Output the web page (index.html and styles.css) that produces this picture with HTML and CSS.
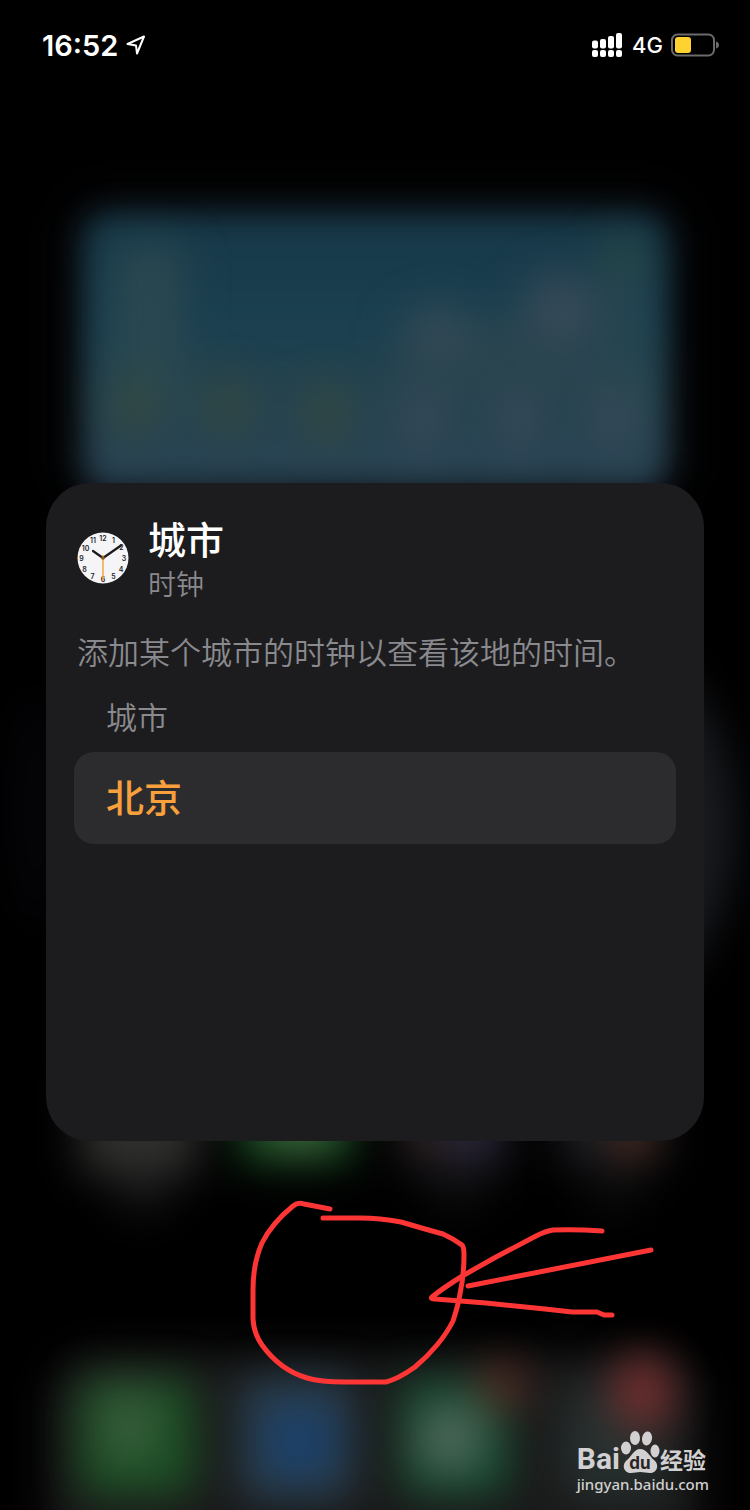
FILE: index.html
```
<!DOCTYPE html>
<html lang="zh-CN">
    <head>
      <meta charset="utf-8">
      <meta name="viewport" content="width=device-width, initial-scale=1">
      <title>城市</title>
      <link rel="stylesheet" href="styles.css">
    </head>
    <body>
        <div class="screen">
            <!-- 模糊的主屏幕背景 -->
            <svg class="wallpaper" viewBox="0 0 750 1510" aria-hidden="true">
                <defs>
                    <filter id="soft" x="-60%" y="-60%" width="220%" height="220%" color-interpolation-filters="sRGB"><feGaussianBlur stdDeviation="15"/></filter>
                    <filter id="softer" x="-90%" y="-90%" width="280%" height="280%" color-interpolation-filters="sRGB"><feGaussianBlur stdDeviation="21"/></filter>
                    <linearGradient id="sky" x1="0" y1="0" x2="0" y2="1">
                        <stop offset="0" stop-color="#173848"/>
                        <stop offset="0.4" stop-color="#1b4050"/>
                        <stop offset="0.65" stop-color="#25434f"/>
                        <stop offset="1" stop-color="#2a4354"/>
                    </linearGradient>
                </defs>
                <rect x="60" y="190" width="630" height="320" rx="50" fill="#07080a" filter="url(#softer)"/>
                <rect x="83" y="213" width="585" height="276" rx="26" fill="url(#sky)" filter="url(#soft)"/>
                <g filter="url(#softer)">
                    <rect x="116" y="246" width="66" height="170" fill="#2b4850"/>
                    <rect x="616" y="260" width="24" height="190" fill="#2b4850"/>
                    <circle cx="622" cy="256" r="16" fill="#345040"/>
                    <rect x="400" y="320" width="200" height="80" fill="#29444f"/>
                    <circle cx="438" cy="332" r="26" fill="#384b58"/>
                    <ellipse cx="562" cy="308" rx="38" ry="34" fill="#384a58"/>
                    <ellipse cx="134" cy="408" rx="18" ry="28" fill="#394a3c"/>
                    <ellipse cx="228" cy="406" rx="18" ry="28" fill="#394a3c"/>
                    <ellipse cx="326" cy="414" rx="18" ry="28" fill="#394a3c"/>
                    <ellipse cx="422" cy="420" rx="22" ry="34" fill="#384a59"/>
                    <ellipse cx="518" cy="420" rx="22" ry="34" fill="#384a59"/>
                    <ellipse cx="612" cy="420" rx="22" ry="34" fill="#384a59"/>
                </g>
                <ellipse cx="590" cy="825" rx="145" ry="190" fill="#191b20" filter="url(#softer)"/>
                <ellipse cx="36" cy="810" rx="16" ry="120" fill="#07050b" filter="url(#softer)"/>
                <g filter="url(#softer)">
                    <rect x="80" y="1080" width="118" height="94" fill="#2f2f2e"/>
                    <rect x="240" y="1070" width="112" height="92" fill="#1b5025"/>
                    <ellipse cx="300" cy="1126" rx="32" ry="24" fill="#41693f"/>
                    <rect x="400" y="1070" width="108" height="100" fill="#1c1a20"/>
                    <circle cx="470" cy="1130" r="28" fill="#2c283e"/>
                    <circle cx="424" cy="1136" r="18" fill="#31231c"/>
                    <rect x="560" y="1070" width="104" height="96" fill="#1c1d22"/>
                    <circle cx="632" cy="1136" r="24" fill="#4a2b20"/>
                    <rect x="115" y="1176" width="56" height="34" fill="#151515"/>
                    <rect x="430" y="1176" width="56" height="30" fill="#0f0f10"/>
                    <rect x="590" y="1176" width="50" height="30" fill="#0f0f10"/>
                </g>
                <rect x="50" y="1354" width="650" height="220" rx="50" fill="#1a1a1a" filter="url(#softer)"/>
                <g filter="url(#softer)">
                    <rect x="78" y="1378" width="118" height="118" rx="16" fill="#1c4f25"/>
                    <ellipse cx="128" cy="1425" rx="32" ry="40" fill="#355b38"/>
                    <rect x="240" y="1378" width="114" height="122" rx="16" fill="#293f4f"/>
                    <circle cx="300" cy="1442" r="36" fill="#1b406b"/>
                    <rect x="400" y="1378" width="110" height="118" rx="16" fill="#174c32"/>
                    <circle cx="450" cy="1438" r="36" fill="#4b6557"/>
                    <rect x="563" y="1386" width="102" height="112" rx="16" fill="#27302f"/>
                    <circle cx="502" cy="1386" r="24" fill="#572b23"/>
                    <ellipse cx="643" cy="1392" rx="32" ry="38" fill="#702e2e"/>
                </g>
            </svg>

            <header class="status-bar">
                <div class="status-left">
                    <span class="time">16:52</span>
                    <svg class="location" viewBox="0 0 20 20"><path d="M1.5 9 L18 1.5 L11 18.5 L10 10.5 Z"/></svg>
                </div>
                <div class="status-right">
                    <svg class="signal" viewBox="0 0 32 24">
                        <rect x="0" y="7.500" width="6" height="8" rx="2"/>
                        <rect x="8" y="6" width="6" height="9.500" rx="2"/>
                        <rect x="16" y="3" width="6" height="12.500" rx="2"/>
                        <rect x="24" y="0" width="6" height="15.500" rx="2"/>
                        <rect x="0" y="17" width="6" height="7" rx="2"/>
                        <rect x="8" y="17" width="6" height="7" rx="2"/>
                        <rect x="16" y="17" width="6" height="7" rx="2"/>
                        <rect x="24" y="17" width="6" height="7" rx="2"/>
                    </svg>
                    <span class="network">4G</span>
                    <svg class="battery" viewBox="0 0 48 24">
                        <rect x="1" y="1.500" width="42" height="21" rx="5.500" fill="none" stroke="#6b6b6b" stroke-width="2"/>
                        <rect x="4" y="4" width="16" height="16" rx="3" fill="#fed22f"/>
                        <path d="M45 8.500 Q48 9.500 48 12 Q48 14.500 45 15.500 Z" fill="#6b6b6b"/>
                    </svg>
                </div>
            </header>

            <main class="card">
                <div class="card-head">
                    <svg class="clock" viewBox="0 0 52 52">
                        <circle cx="26" cy="26" r="25.500" fill="#f5f5f8"/>
                        <g class="clock-num">
                            <text x="26" y="8.500">12</text>
                            <text x="36.500" y="11">1</text>
                            <text x="44.500" y="18">2</text>
                            <text x="47" y="28.500">3</text>
                            <text x="44" y="39.500">4</text>
                            <text x="36.500" y="47">5</text>
                            <text x="26" y="50">6</text>
                            <text x="15.500" y="47">7</text>
                            <text x="7.500" y="39.500">8</text>
                            <text x="4.500" y="28.500">9</text>
                            <text x="8.500" y="19">10</text>
                            <text x="16" y="11">11</text>
                        </g>
                        <path d="M26 26 L16 19 M26 26 L44 13.500" stroke="#1b1b1d" stroke-width="2.200" stroke-linecap="round"/>
                        <path d="M26 23 V49" stroke="#f3a63f" stroke-width="1.500"/>
                        <circle cx="26" cy="26" r="1.800" fill="#8d5b22"/>
                    </svg>
                    <div class="card-title">
                        <h1>城市</h1>
                        <p>时钟</p>
                    </div>
                </div>
                <p class="desc">添加某个城市的时钟以查看该地的时间。</p>
                <h2 class="label" id="city-label">城市</h2>
                <button class="city" type="button" aria-describedby="city-label">北京</button>
            </main>

            <!-- 手绘标记 -->
            <svg class="doodle" viewBox="0 0 750 1510" aria-hidden="true">
                <path d="M330 1209 L304 1204 Q298 1202 293 1206 Q272 1223 262 1243 Q253 1263 253 1290 V1319 Q254 1334 262 1345 Q280 1370 307 1378 Q320 1382 345 1382 H386 Q398 1379 415 1367 Q427 1357 437 1345 Q447 1333 453 1321 Q458 1306 460 1294 Q464 1275 464 1255 Q464 1247 462 1245 Q454 1239 443 1234 L425 1229 L401 1222 Q380 1218 360 1218 H323"/>
                <path d="M602 1231 Q575 1229 553 1230 Q546 1231 536 1236 L496 1257 L464 1275 Q443 1288 432 1297 Q430 1299 435 1299 L486 1303 L545 1309 L572 1312 H597 L604 1315 H612"/>
                <path d="M468 1286 L651 1250"/>
            </svg>

            <footer class="watermark">
                <div class="brand">
                    <span class="brand-bai">Bai</span>
                    <svg class="paw" viewBox="0 0 40 44">
                        <ellipse cx="6" cy="18" rx="5" ry="6.500"/>
                        <ellipse cx="15" cy="8" rx="5" ry="7"/>
                        <ellipse cx="27" cy="8.500" rx="5" ry="7" transform="rotate(10 27 8.500)"/>
                        <ellipse cx="35" cy="21" rx="4.500" ry="6.500"/>
                        <path d="M20 19 C14 19 12 26 7 30 C1 35 4 43 11 43 C15 43 17 42 20 42 C24 42 26 43 30 43 C37 43 40 35 34 30 C29 26 27 19 20 19 Z"/>
                        <text x="20" y="39">du</text>
                    </svg>
                    <span class="brand-cn">经验</span>
                </div>
                <span class="url">jingyan.baidu.com</span>
            </footer>
        </div>
    </body>
</html>
```
FILE: styles.css
```
*{
    box-sizing: border-box;
}
body,h1,h2,p{
    margin: 0;
}
body{
    background: #000;
    color: #fff;
    font-family: Inter, "Noto Sans CJK SC", sans-serif;
}
.screen{
    position: relative;
    min-height: 100vh;
    overflow: hidden;
}
.wallpaper,.doodle{
    position: absolute;
    top: 0;
    left: 0;
    width: 100%;
}
.doodle{
    fill: none;
    stroke: #fe3535;
    stroke-width: 5;
    stroke-linecap: round;
    stroke-linejoin: round;
    pointer-events: none;
}
/*状态栏*/
.status-bar{
    position: relative;
    display: flex;
    justify-content: space-between;
    align-items: center;
    height: 90px;
    padding: 0 31px 0 42px;
}
.status-left,.status-right{
    display: flex;
    align-items: center;
    gap: 8px;
}
.time{
    font-size: 29px;
    font-weight: 600;
}
.location{
    width: 20px;
    height: 20px;
    fill: none;
    stroke: #fff;
    stroke-width: 2;
    stroke-linejoin: round;
}
.signal{
    width: 32px;
    height: 24px;
    fill: #fff;
}
.network{
    font-size: 22px;
    font-weight: 500;
}
.battery{
    width: 48px;
    height: 24px;
}
/*卡片*/
.card{
    position: relative;
    aspect-ratio: 1;
    margin: 393px 46px 0;
    padding: 30px 28px;
    border-radius: 44px;
    background: #1c1c1e;
    font-family: "Noto Sans CJK SC", sans-serif;
}
.card-head{
    display: flex;
    align-items: center;
    gap: 19px;
    padding: 0 3px;
}
.clock{
    width: 52px;
    height: 52px;
}
.clock-num{
    font-family: Inter, sans-serif;
    font-size: 7px;
    font-weight: 600;
    text-anchor: middle;
    fill: #1b1b1d;
}
.card-title h1{
    font-size: 38px;
    line-height: 50px;
    font-weight: 500;
}
.card-title p,.desc,.label{
    color: #8a8a8e;
    font-weight: 350;
}
.card-title p{
    font-size: 28px;
    line-height: 40px;
}
.desc,.label{
    font-size: 31px;
    line-height: 44px;
}
.desc{
    margin-top: 26px;
    padding: 0 3px;
}
.label{
    margin-top: 21px;
    padding: 0 32px;
}
.city{
    display: block;
    width: 100%;
    height: 92px;
    margin-top: 14px;
    padding: 0 32px 6px;
    border: 0;
    border-radius: 20px;
    background: #2c2c2e;
    color: #f7a03c;
    font-family: inherit;
    font-size: 38px;
    font-weight: 500;
    text-align: left;
}
/*水印*/
.watermark{
    position: absolute;
    right: 41px;
    bottom: 16px;
    color: #d2d0d0;
}
.brand{
    display: flex;
    align-items: flex-end;
}
.brand-bai{
    font-family: Roboto, sans-serif;
    font-size: 30px;
    line-height: 30px;
    font-weight: 700;
}
.paw{
    width: 40px;
    height: 44px;
    fill: #d2d0d0;
}
.paw text{
    fill: #2a2323;
    font-family: Inter, sans-serif;
    font-size: 17px;
    font-weight: 700;
    text-anchor: middle;
}
.brand-cn{
    font-family: "Noto Sans CJK SC", sans-serif;
    font-size: 23px;
    line-height: 30px;
    font-weight: 700;
}
.url{
    display: block;
    font-family: "Noto Sans", sans-serif;
    font-size: 15px;
    line-height: 20px;
    font-weight: 500;
}
```
